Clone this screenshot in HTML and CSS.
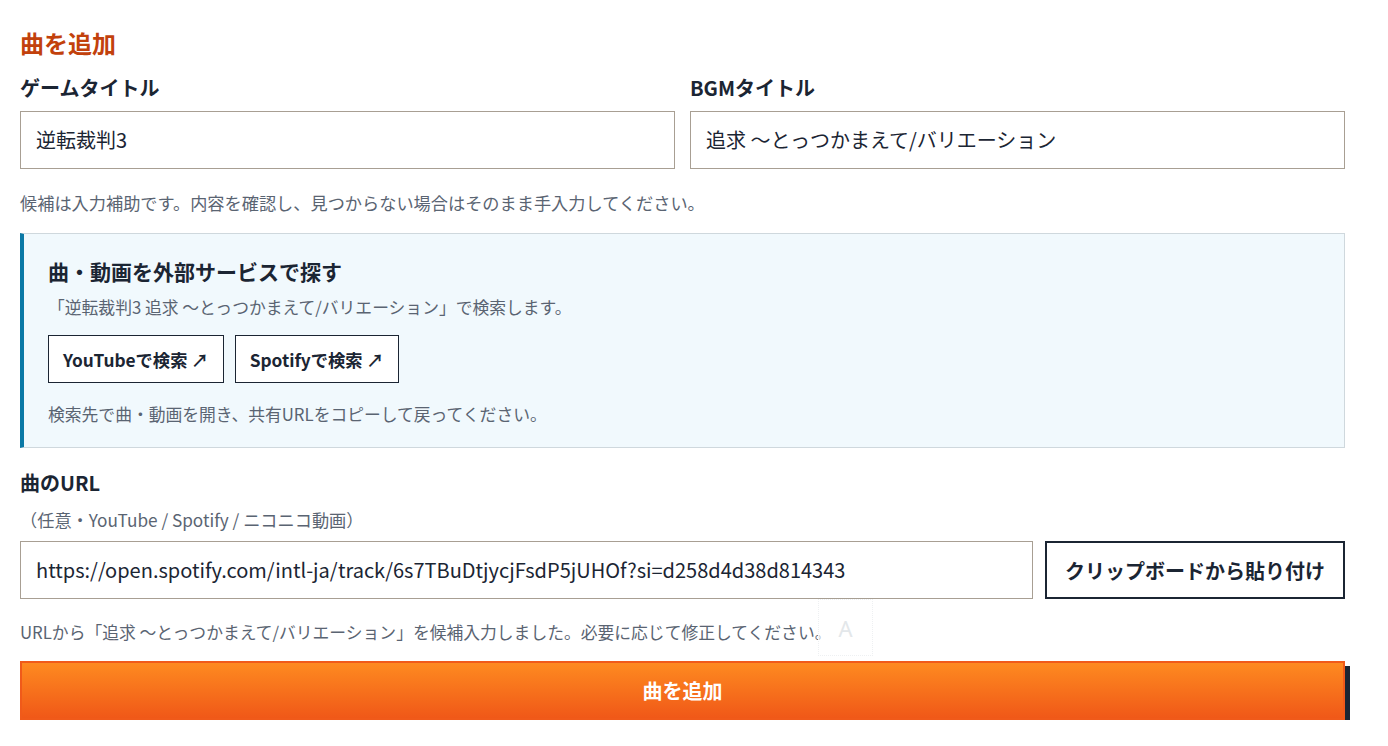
FILE: index.html
```html
<!DOCTYPE html>
<html lang="ja">
<head>
<meta charset="utf-8">
<title>曲を追加</title>
<link rel="stylesheet" href="styles.css">
</head>
<body>
<main class="form">
  <h2 class="title">曲を追加</h2>
  <div class="row2">
    <div class="field">
      <label class="label">ゲームタイトル</label>
      <div class="input">逆転裁判3</div>
    </div>
    <div class="field">
      <label class="label">BGMタイトル</label>
      <div class="input">追求 〜とっつかまえて/バリエーション</div>
    </div>
  </div>
  <p class="hint hint-top">候補は入力補助です。内容を確認し、見つからない場合はそのまま手入力してください。</p>

  <section class="panel">
    <h3 class="panel-title">曲・動画を外部サービスで探す</h3>
    <p class="panel-sub">「逆転裁判3 追求 〜とっつかまえて/バリエーション」で検索します。</p>
    <div class="btns">
      <a class="btn-out">YouTubeで検索 ↗</a>
      <a class="btn-out">Spotifyで検索 ↗</a>
    </div>
    <p class="panel-note">検索先で曲・動画を開き、共有URLをコピーして戻ってください。</p>
  </section>

  <label class="label url-label">曲のURL</label>
  <p class="optional">（任意・YouTube / Spotify / ニコニコ動画）</p>
  <div class="url-row">
    <div class="input url-input">https://open.spotify.com/intl-ja/track/6s7TBuDtjycjFsdP5jUHOf?si=d258d4d38d814343</div>
    <button class="paste">クリップボードから貼り付け</button>
  </div>
  <div class="msg-wrap">
    <p class="hint msg">URLから「追求 〜とっつかまえて/バリエーション」を候補入力しました。必要に応じて修正してください。</p>
    <div class="float-a">A</div>
  </div>
  <button class="submit">曲を追加</button>
</main>
</body>
</html>
```

FILE: styles.css
```css
* { box-sizing: border-box; }
html, body { margin: 0; padding: 0; background: #ffffff; }
body {
  font-family: "Noto Sans CJK JP", "Noto Sans", sans-serif;
  color: #1b2533;
}
.form {
  width: 1325px;
  margin-left: 20px;
  padding-top: 27px;
}
.title {
  margin: 0;
  font-size: 24px;
  line-height: 32px;
  font-weight: 700;
  color: #c2410c;
}
.row2 {
  display: grid;
  grid-template-columns: 1fr 1fr;
  column-gap: 15px;
  margin-top: 15px;
}
.label {
  display: block;
  font-size: 20px;
  font-weight: 700;
  line-height: 28px;
  color: #1b2533;
}
.input {
  margin-top: 9px;
  height: 58px;
  border: 1px solid #a89f93;
  background: #fff;
  font-size: 20px;
  line-height: 56px;
  padding: 0 15px;
  color: #1b2533;
  white-space: nowrap;
  overflow: hidden;
}
.hint {
  margin: 0;
  font-size: 16.8px;
  line-height: 24px;
  color: #5a6472;
}
.hint-top { margin-top: 22px; font-size: 17.2px; }

.panel {
  margin-top: 18px;
  height: 215px;
  background: #f1f9fd;
  border: 1px solid #cfd8dd;
  border-left: 4px solid #0b79a6;
  padding: 23px 24px 0 24px;
}
.panel-title {
  margin: 0;
  font-size: 21px;
  font-weight: 700;
  line-height: 28px;
  color: #1b2533;
}
.panel-sub {
  margin: 10px 0 0 0;
  font-size: 16.8px;
  line-height: 24px;
  color: #5a6472;
}
.btns {
  display: flex;
  gap: 11px;
  margin-top: 16px;
}
.btn-out {
  display: inline-flex;
  align-items: center;
  height: 48px;
  padding: 0 14px;
  border: 1px solid #1b2533;
  background: #fff;
  font-size: 17.3px;
  font-weight: 700;
  color: #1b2533;
}
.panel-note {
  margin: 19px 0 0 0;
  font-size: 16.8px;
  line-height: 24px;
  color: #5a6472;
}
.url-label { margin-top: 21px; }
.optional {
  margin: 11px 0 0 0;
  font-size: 17.2px;
  line-height: 24px;
  color: #5a6472;
}
.url-row {
  display: flex;
  gap: 12px;
  margin-top: 9px;
}
.url-row .input { margin-top: 0; flex: 1; }
.paste {
  width: 300px;
  height: 58px;
  border: 2px solid #1b2533;
  background: #fff;
  font-family: inherit;
  font-size: 20px;
  font-weight: 700;
  color: #1b2533;
  padding: 0;
}
.msg-wrap {
  position: relative;
}
.msg { padding-top: 21px; }
.float-a {
  position: absolute;
  left: 798px;
  top: 0;
  width: 55px;
  height: 57px;
  border: 1px dotted #eef0f2;
  background: rgba(255,255,255,0.6);
  color: #e3e7ea;
  font-family: "Noto Sans", sans-serif;
  font-size: 22px;
  line-height: 57px;
  text-align: center;
}
.submit {
  display: block;
  width: 100%;
  height: 59px;
  margin-top: 17px;
  border: 2px solid #f05a1a;
  background: linear-gradient(180deg, #fe8a20 0%, #f05818 100%);
  box-shadow: 5px 5px 0 #1b2533;
  color: #fff;
  font-family: inherit;
  font-size: 20px;
  font-weight: 700;
}
```
